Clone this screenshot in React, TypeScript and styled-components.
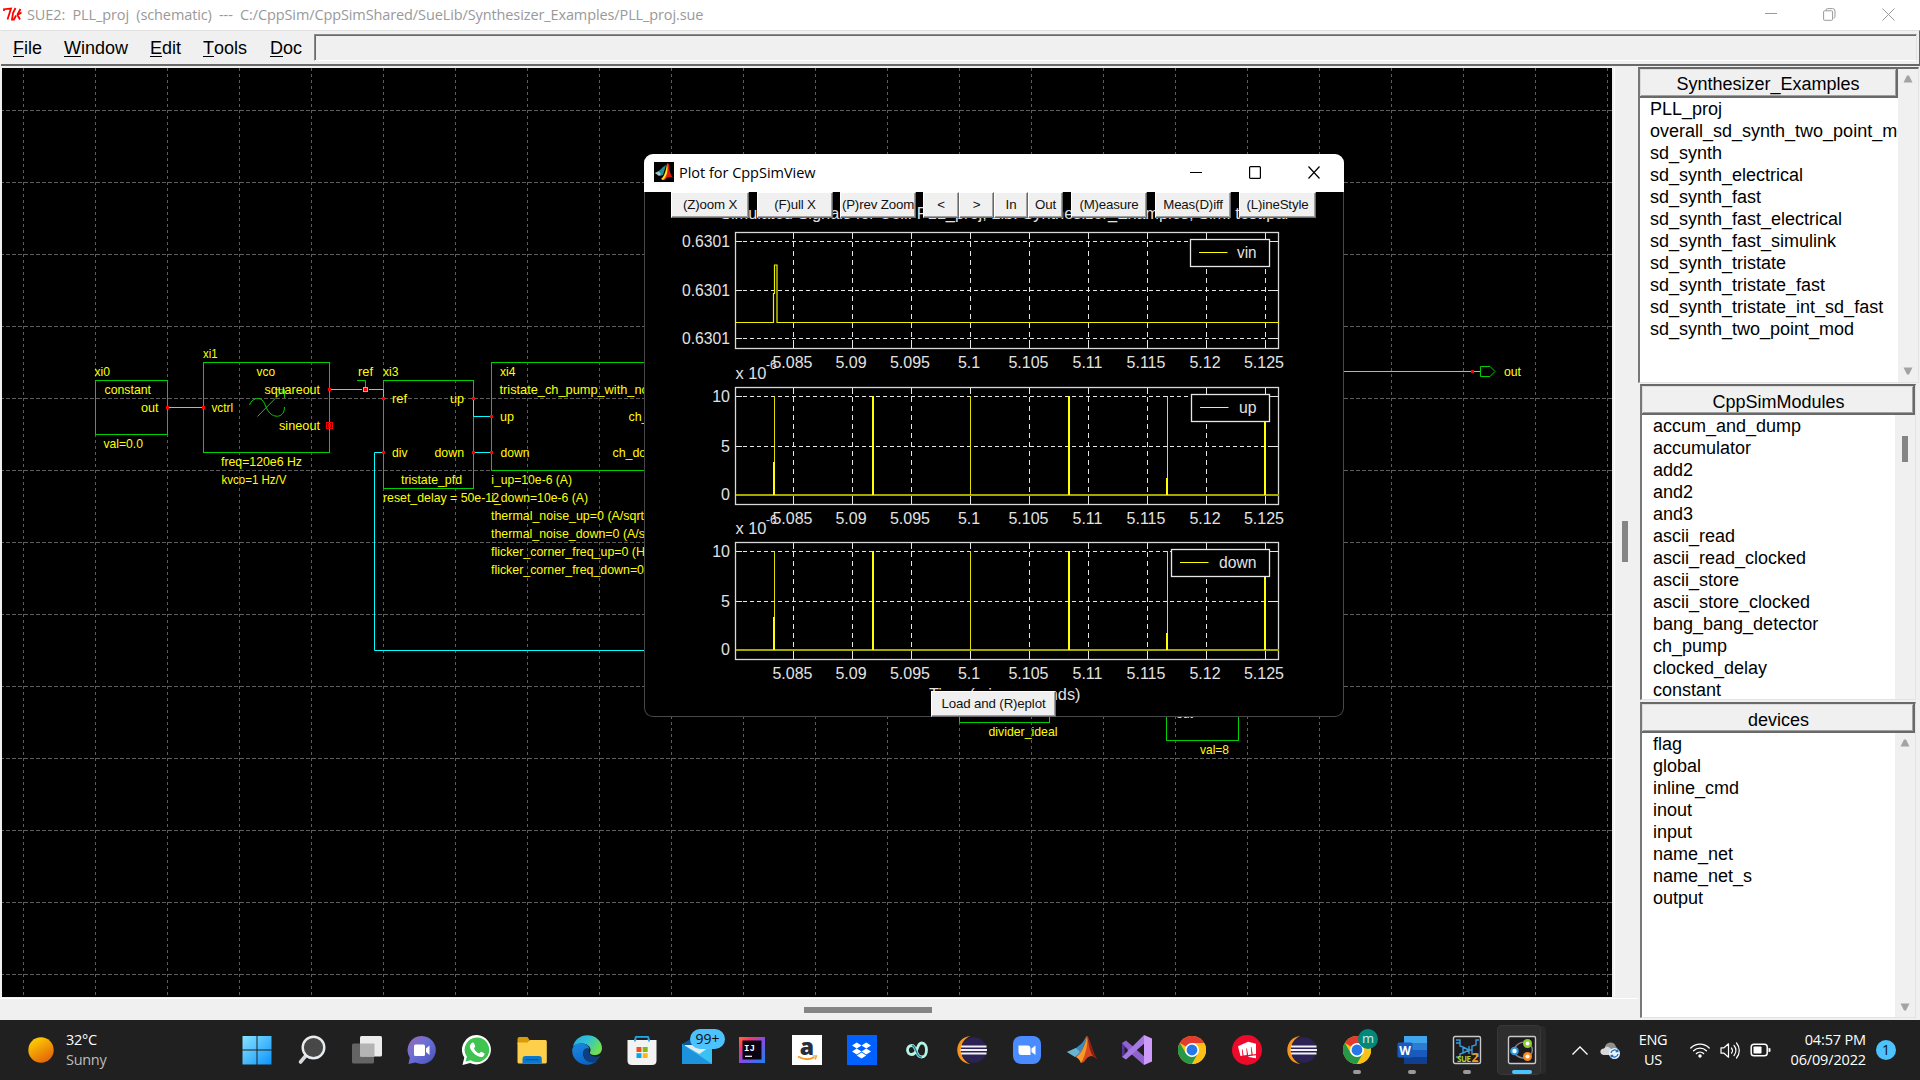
import React from "react";
import styled, { createGlobalStyle } from "styled-components";
import { SiRiotgames } from "react-icons/si";
import { FaDropbox } from "react-icons/fa";

const ARIAL = `"Liberation Sans", Arial, sans-serif`;
const SEGOE = `"Open Sans", "Noto Sans", sans-serif`;

const GlobalStyle = createGlobalStyle`
  * { box-sizing: border-box; }
  html, body { margin: 0; padding: 0; background: #f0f0f0; overflow: hidden; }
  svg { display: block; flex: none; }
`;

/* ---------- shell ---------- */

const Screen = styled.div`
  position: relative;
  width: 1920px;
  height: 1080px;
  display: flex;
  flex-direction: column;
  background: #f0f0f0;
  font-family: ${ARIAL};
  overflow: hidden;
`;

const TitleBar = styled.header`
  height: 30px;
  flex: none;
  display: flex;
  align-items: center;
  padding: 0 25px 2px 3px;
  background: #fff;
`;

const TitleText = styled.span`
  flex: 1;
  margin-left: 5px;
  font: 14.5px ${SEGOE};
  letter-spacing: -0.11px;
  color: #999;
  white-space: pre;
  font-variant-ligatures: none;
`;

const Captions = styled.div<{ $gap: number }>`
  display: flex;
  align-items: center;
  gap: ${(p) => p.$gap}px;
`;

const MenuBar = styled.nav`
  height: 36px;
  flex: none;
  display: flex;
  margin-left: 1px;
  padding: 3px 2px 4px 12px;
  border-top: 1px solid #e0e0e0;
  border-bottom: 2px solid #696969;
  border-right: 1px solid #696969;
`;

const MenuItem = styled.div<{ $width: number }>`
  width: ${(p) => p.$width}px;
  padding-top: 1px;
  font-size: 18px;
  line-height: 26px;
  color: #000;
`;

const Mnemonic = styled.span`
  display: inline-block;
  height: 22px;
  line-height: 26px;
  border-bottom: 1px solid #000;
`;

const Entry = styled.div`
  flex: 1;
  height: 27px;
  margin-left: 1px;
  border: 1px solid;
  border-color: #8a8a8a #e3e3e3 #fff #8a8a8a;
  box-shadow: inset 1px 1px 0 #696969;
`;

const Workspace = styled.main`
  flex: 1;
  min-height: 0;
  display: flex;
  padding-top: 1px;
`;

const CanvasColumn = styled.section`
  width: 1638px;
  flex: none;
  display: flex;
  flex-direction: column;
`;

const CanvasRow = styled.div`
  display: flex;
  height: 932px;
  padding: 1px 0 2px 2px;
  border-bottom: 1px solid #fff;
`;

const VScroll = styled.div`
  width: 24px;
  margin-left: 2px;
  border-left: 1px solid #fff;
  display: flex;
  justify-content: center;
  align-items: flex-start;
  padding: 453px 3px 0 0;
`;

const HScroll = styled.div`
  flex: 1;
  display: flex;
  align-items: center;
  padding: 1px 0 0 804px;
`;

const Thumb = styled.i<{ $w: number; $h: number }>`
  width: ${(p) => p.$w}px;
  height: ${(p) => p.$h}px;
  background: #858585;
`;

/* ---------- side bar ---------- */

const Sidebar = styled.aside`
  flex: 1;
  display: flex;
  flex-direction: column;
  min-width: 0;
`;

const Panel = styled.div<{ $height: number; $left: number; $right: number; $top?: number }>`
  height: ${(p) => p.$height}px;
  flex: none;
  margin: ${(p) => p.$top ?? 0}px ${(p) => p.$right}px 0 ${(p) => p.$left}px;
  display: grid;
  grid-template-columns: 1fr 20px;
  grid-template-rows: 29px 1fr;
  border: 2px solid;
  border-color: #696969 #e3e3e3 #e3e3e3 #777;
  border-right-width: 1px;
  border-bottom-width: 1px;
  background: #fff;
`;

const PanelHead = styled.div<{ $wide?: boolean }>`
  grid-column: ${(p) => (p.$wide ? "1 / 3" : "1 / 2")};
  display: flex;
  justify-content: center;
  align-items: center;
  padding: ${(p) => (p.$wide ? "4px 0 0 2px" : "2px 0 0 0")};
  font-size: 18px;
  line-height: 20px;
  background: #f0f0f0;
  border: solid #696969;
  border-width: 0 2px 2px 0;
  box-shadow: inset 1px 1px 0 #dcdcdc, inset -1px -1px 0 #a0a0a0;
`;

const List = styled.ul<{ $indent: number }>`
  margin: 0;
  padding: 0 0 0 ${(p) => p.$indent}px;
  list-style: none;
  overflow: hidden;
  grid-column: 1;
  grid-row: 2;
`;

const ListItem = styled.li`
  height: 22px;
  line-height: 22px;
  font-size: 18px;
  white-space: nowrap;
`;

const Track = styled.div<{ $full?: boolean; $pad: string }>`
  grid-column: 2;
  grid-row: ${(p) => (p.$full ? "1 / 3" : "2")};
  display: flex;
  flex-direction: column;
  align-items: center;
  justify-content: space-between;
  padding: ${(p) => p.$pad};
  background: #f0f0f0;
`;

const Arrow = ({ down }: { down?: boolean }) => (
  <svg width="10" height="8" viewBox="0 0 10 8">
    <path d={down ? "M0.5 0.5H9.5L6 7.5H4Z" : "M0.5 7.5H9.5L6 0.5H4Z"} fill="#a3a3a3" />
  </svg>
);

const EXAMPLES = ["PLL_proj", "overall_sd_synth_two_point_mod", "sd_synth", "sd_synth_electrical", "sd_synth_fast", "sd_synth_fast_electrical", "sd_synth_fast_simulink", "sd_synth_tristate", "sd_synth_tristate_fast", "sd_synth_tristate_int_sd_fast", "sd_synth_two_point_mod"];
const MODULES = ["accum_and_dump", "accumulator", "add2", "and2", "and3", "ascii_read", "ascii_read_clocked", "ascii_store", "ascii_store_clocked", "bang_bang_detector", "ch_pump", "clocked_delay", "constant"];
const DEVICES = ["flag", "global", "inline_cmd", "inout", "input", "name_net", "name_net_s", "output"];

const Items = ({ names, indent }: { names: string[]; indent: number }) => (
  <List $indent={indent}>
    {names.map((n) => (
      <ListItem key={n}>{n}</ListItem>
    ))}
  </List>
);

/* ---------- schematic ---------- */

const Schematic = styled.svg`
  background: #000;
  font-family: ${ARIAL};
  font-size: 12.4px;
`;

type Label = [string, number, number, number?];
const LABELS: Label[] = [
  ["xi0", 94.5, 376, 110], ["constant", 104.5, 394, 151], ["out", 141, 412, 158.5], ["val=0.0", 103.5, 448, 143],
  ["xi1", 203, 358, 217.5], ["vco", 256.5, 376, 275], ["squareout", 264.5, 394, 320], ["vctrl", 211.5, 412, 233],
  ["sineout", 279, 430, 320], ["freq=120e6 Hz", 221, 466, 302], ["kvco=1 Hz/V", 221.5, 484, 286.5],
  ["ref", 358, 376, 373], ["xi3", 383, 376, 398.5], ["ref", 392, 403, 407], ["up", 450, 403, 464],
  ["div", 392, 457, 407.5], ["down", 434.5, 457, 464], ["tristate_pfd", 401, 484, 462],
  ["reset_delay = 50e-12", 383, 502, 499], ["xi4", 500, 376, 515.5], ["tristate_ch_pump_with_noise", 499.5, 394, 665],
  ["up", 500, 421, 514], ["down", 500.5, 457, 529.5], ["ch_up", 628.5, 421], ["ch_down", 612.5, 457],
  ["i_up=10e-6 (A)", 491.3, 484, 572], ["i_down=10e-6 (A)", 491.3, 502, 588],
  ["thermal_noise_up=0 (A/sqrt", 491, 520, 644], ["thermal_noise_down=0 (A/sqrt", 491, 538],
  ["flicker_corner_freq_up=0 (Hz)", 491, 556], ["flicker_corner_freq_down=0", 491, 574, 644],
  ["out", 1504, 376, 1521], ["divider_ideal", 988.5, 736, 1057.5], ["out", 1176, 718, 1193], ["val=8", 1200, 754, 1229],
];

const BOXES = [
  [95, 380, 72, 54], [203, 362, 126, 90], [383, 380, 90, 108], [491, 362, 180, 108],
  [959, 650, 90, 72], [1166, 686, 72, 54],
];

const PINS = [
  [167, 407], [203, 407], [329, 389], [329, 425], [383, 398], [473, 398], [491, 416], [473, 452], [491, 452], [383, 452], [1472, 371],
];

const SchematicView = () => (
  <Schematic width="1610" height="929" viewBox="2 68 1610 929">
    <g stroke="#5c5c5c" shapeRendering="crispEdges">
      {Array.from({ length: 13 }, (_, i) => (
        <line key={i} x1="0" x2="1612" y1={110.5 + 72 * i} y2={110.5 + 72 * i} strokeDasharray="4 2" />
      ))}
      {Array.from({ length: 23 }, (_, i) => (
        <line key={i} y1="68" y2="997" x1={23.5 + 72 * i} x2={23.5 + 72 * i} strokeDasharray="3 3" />
      ))}
    </g>
    <g fill="none" stroke="#00d000">
      {BOXES.map(([x, y, w, h]) => (
        <rect key={`${x}-${y}`} x={x + 0.5} y={y + 0.5} width={w} height={h} />
      ))}
      <path d="M357 380.5H365.5V387" />
      <path d="M249.5 405Q252 398.5 258 398.5C265 398.5 265 408 269 412C274 418.500 284.500 418 284.5 407M257.5 416.5L284 389.500M275 389.5H284.5V398" />
      <path d="M1480.500 366.500H1490L1495 371.500L1490 376.500H1480.500Z" />
    </g>
    <g fill="none" stroke="#00ffff">
      <path d="M167 407.500H203M330 389.500H362M369 389.500H383.500V398M473.500 398V416.500H491M473 452.500H491M383 452.500H374.500V650.500H960M1300 371.500H1480" />
      <rect x="363.500" y="387.500" width="4" height="4" />
    </g>
    <g fill="#ff0000">
      {PINS.map(([x, y]) => (
        <rect key={`${x}-${y}`} x={x - 1} y={y - 1} width="3" height="3" />
      ))}
      <rect x="364" y="388" width="3" height="3" />
      <rect x="326.500" y="422.500" width="6" height="6" fill="none" stroke="#f00" />
    </g>
    <g fill="#ffff00">
      {LABELS.map(([t, x, y, end], i) => (
        <text key={i} x={x} y={y} textLength={end ? end - x : undefined} lengthAdjust="spacingAndGlyphs">{t}</text>
      ))}
    </g>
  </Schematic>
);

/* ---------- plot window ---------- */

const PlotWindow = styled.section`
  position: absolute;
  left: 644px;
  top: 154px;
  width: 700px;
  height: 563px;
  display: flex;
  flex-direction: column;
  justify-content: flex-start;
  border-radius: 9px;
  background: #000;
  box-shadow: inset 0 0 0 1px #484848;
  overflow: hidden;
`;

const PlotTitleBar = styled.header`
  height: 38px;
  flex: none;
  display: flex;
  align-items: center;
  padding: 0 24px 2px 10px;
  background: #fff;
  z-index: 1;
`;

const PlotTitle = styled.span`
  flex: 1;
  margin-left: 5px;
  font: 14.5px ${SEGOE};
  letter-spacing: -0.02px;
  color: #000;
`;

const Figure = styled.svg`
  position: absolute;
  left: 0;
  top: 38px;
  font-family: ${ARIAL};
  font-size: 16px;
`;

const ToolRow = styled.div`
  display: flex;
  padding-left: 27px;
  z-index: 1;
`;

const ToolButton = styled.button<{ $w: number; $ml?: number }>`
  width: ${(p) => p.$w}px;
  height: 26px;
  margin: 0 0 0 ${(p) => p.$ml ?? 0}px;
  padding: 0 0 2px;
  border: 1px solid;
  border-color: #fff #696969 #696969 #fff;
  box-shadow: inset -1px -1px 0 #a0a0a0;
  background: #f0f0f0;
  font: 13.3px ${ARIAL};
  letter-spacing: -0.15px;
  color: #111;
  white-space: nowrap;
  overflow: hidden;
`;

const LoadRow = styled.div`
  display: flex;
  margin-top: auto;
  padding-left: 287px;
  z-index: 1;
`;

const XT = [793.5, 852, 911, 970, 1029.5, 1088.5, 1147, 1206, 1265];
const XL = ["5.085", "5.09", "5.095", "5.1", "5.105", "5.11", "5.115", "5.12", "5.125"];

interface AxesProps {
  top: number;
  bottom: number;
  rows: [number, string][];
  exponent?: boolean;
  legend: { name: string; x: number; textX: number };
  children: React.ReactNode;
}

const Axes = ({ top, bottom, rows, exponent, legend, children }: AxesProps) => (
  <g>
    <g stroke="#e6e6e6" shapeRendering="crispEdges">
      {XT.map((x) => (
        <g key={x}>
          <line x1={x} x2={x} y1={top} y2={bottom} strokeDasharray="5 4" />
          <path d={`M${x} ${top}v6M${x} ${bottom}v-9`} />
        </g>
      ))}
      {rows.map(([y], i) => (
        <g key={i}>
          <line x1="736" x2="1279" y1={y} y2={y} strokeDasharray="4 3" />
          <path d={`M736 ${y}h6M1279 ${y}h-8`} />
        </g>
      ))}
    </g>
    <rect x="735.500" y={top} width="543" height={bottom - top} fill="none" stroke="#d8d8d8" strokeWidth="1.300" />
    {children}
    <rect x={legend.x} y={top + 7} width={1269.5 - legend.x} height="27" fill="#000" stroke="#e6e6e6" strokeWidth="1.300" />
    <path d={`M${legend.x + 8.5} ${top + 20}h28.500`} stroke="#ff0" />
    <g fill="#e2e2e2">
      <text x={legend.textX} y={top + 25.500} textLength={1256.5 - legend.textX} lengthAdjust="spacingAndGlyphs">{legend.name}</text>
      {rows.map(([y, t], i) => (
        <text key={i} x="730" y={y + 5} textAnchor="end" textLength={t.length > 2 ? 48 : undefined} lengthAdjust="spacingAndGlyphs">{t}</text>
      ))}
      {XL.map((t, i) => (
        <text key={t} x={XT[i] - 1} y={bottom + 19} textAnchor="middle">{t}</text>
      ))}
      {exponent && (
        <>
          <text x="735.500" y={top - 9} textLength="31" lengthAdjust="spacingAndGlyphs">x 10</text>
          <text x="766" y={top - 19} fontSize="12">-6</text>
        </>
      )}
    </g>
  </g>
);

const Spikes = ({ top, base }: { top: number; base: number }) => (
  <g shapeRendering="crispEdges">
    <rect x="736" y={base - 1} width="543" height="2" fill="#a6a600" />
    <g fill="#e0e000">
      <rect x="774" y={top} width="1" height={base - top} />
      <rect x="970" y={top} width="1" height={base - top} />
      <rect x="1167" y={top} width="1" height={base - top} />
    </g>
    <g fill="#ffff00">
      <rect x="773" y={base - 33} width="2" height="33" />
      <rect x="872" y={top} width="2" height={base - top} />
      <rect x="1068" y={top} width="2" height={base - top} />
      <rect x="1166" y={base - 17} width="2" height="17" />
      <rect x="1264" y={top} width="2" height={base - top} />
    </g>
  </g>
);

const MatlabMark = ({ size }: { size: number }) => (
  <svg width={size} height={size} viewBox="0 0 30 30">
    <path d="M0 17L9 13L14 9C17 7 18 2 20 1L16 17L9 22Z" fill="#3c88b8" />
    <path d="M0 17L9 13L13 17L8 22Z" fill="#6ab4cf" />
    <path d="M9 22C13 20 17 13 20 1C22 1 25 16 30 24C25 19 21 20 17 27L14 28C13 25 11 23 9 22Z" fill="#d9481c" />
    <path d="M20 1C21 5 20 18 14 28C13 25 11 23 9 22C14 19 18 12 20 1Z" fill="#f49a2a" />
    <path d="M20 1C22 3 25 16 30 24L26 21C22 15 22 8 20 1Z" fill="#8a1c10" />
  </svg>
);

/* low-colour variant of the mark, as drawn in the figure's caption */
const MatlabSmall = () => (
  <svg width="20" height="20" viewBox="0 0 20 20">
    <rect width="20" height="20" fill="#000" />
    <path d="M1 11L6 8L9 5L12 3L9 13L6 14Z" fill="#2b8f96" />
    <path d="M1 11L5 9.500L7 12L5 14Z" fill="#a8c4c8" />
    <path d="M8 18C11 15 13 10 13 1L15 2C15 8 16 12 19 16C16 14 13 15 11 18Z" fill="#e01b0c" />
    <path d="M7 17C10 15 12 9 13 1.500C14.500 7 13 15 9 18Z" fill="#ffe11a" />
  </svg>
);

const PlotView = () => (
  <PlotWindow>
    <PlotTitleBar>
      <MatlabSmall />
      <PlotTitle>Plot for CppSimView</PlotTitle>
      <Captions $gap={47}>
        <svg width="12" height="12"><path d="M0 6.500H12" stroke="#000" /></svg>
        <svg width="12" height="14"><rect x="0.600" y="1.600" width="10.800" height="11.800" rx="1" fill="none" stroke="#000" strokeWidth="1.200" /></svg>
        <svg width="12" height="14"><path d="M0.500 1.500L11.500 13.500M11.500 1.500L0.500 13.500" stroke="#000" strokeWidth="1.200" /></svg>
      </Captions>
    </PlotTitleBar>
    <Figure width="700" height="525" viewBox="644 192 700 525">
      <g fill="#e2e2e2">
        <text x="720" y="219" textLength="570" lengthAdjust="spacingAndGlyphs">Simulated Signals for Cell: PLL_proj, Lib: Synthesizer_Examples, Sim: test.par</text>
        <text x="929" y="700" textLength="151.500" lengthAdjust="spacingAndGlyphs">Time (microseconds)</text>
      </g>
      <Axes top={232.5} bottom={348.5} rows={[[241.5, "0.6301"], [290.5, "0.6301"], [338.5, "0.6301"]]} legend={{ name: "vin", x: 1190.5, textX: 1237 }}>
        <path d="M736 322.500H773.500V293.500H774.500V265H777V322.500H1279" fill="none" stroke="#f0f000" strokeWidth="1.200" />
      </Axes>
      <Axes exponent top={387.5} bottom={504.5} rows={[[396.5, "10"], [446.5, "5"], [495, "0"]]} legend={{ name: "up", x: 1191.5, textX: 1239 }}>
        <Spikes top={396} base={495} />
      </Axes>
      <Axes exponent top={542.5} bottom={659.5} rows={[[551.5, "10"], [601.5, "5"], [650, "0"]]} legend={{ name: "down", x: 1171.5, textX: 1219 }}>
        <Spikes top={551} base={650} />
      </Axes>
    </Figure>
    <ToolRow>
      <ToolButton $w={78}>(Z)oom X</ToolButton>
      <ToolButton $w={76} $ml={8}>(F)ull X</ToolButton>
      <ToolButton $w={76} $ml={7}>(P)rev Zoom</ToolButton>
      <ToolButton $w={36} $ml={7}>&lt;</ToolButton>
      <ToolButton $w={35}>&gt;</ToolButton>
      <ToolButton $w={34}>In</ToolButton>
      <ToolButton $w={35}>Out</ToolButton>
      <ToolButton $w={76} $ml={8}>(M)easure</ToolButton>
      <ToolButton $w={76} $ml={8}>Meas(D)iff</ToolButton>
      <ToolButton $w={77} $ml={8}>(L)ineStyle</ToolButton>
    </ToolRow>
    <LoadRow>
      <ToolButton $w={125}>Load and (R)eplot</ToolButton>
    </LoadRow>
  </PlotWindow>
);

/* ---------- task bar ---------- */

const Taskbar = styled.footer`
  height: 60px;
  flex: none;
  display: flex;
  align-items: center;
  background: #202020;
  color: #fff;
  font-family: ${SEGOE};
`;

const Weather = styled.div`
  width: 229px;
  display: flex;
  align-items: center;
  gap: 12px;
  padding-left: 28px;
`;

const Lines = styled.div<{ $align: string; $w?: number; $ml?: number; $spacing?: number }>`
  width: ${(p) => (p.$w ? `${p.$w}px` : "auto")};
  margin-left: ${(p) => p.$ml ?? 0}px;
  text-align: ${(p) => p.$align};
  font-size: 14.5px;
  line-height: 20px;
  letter-spacing: ${(p) => p.$spacing ?? -0.3}px;
  white-space: nowrap;
`;

const Muted = styled.div`
  color: #bcbcbc;
`;

const Apps = styled.div`
  display: flex;
  width: 1320px;
`;

const AppCell = styled.div<{ $active?: boolean }>`
  position: relative;
  width: ${(p) => (p.$active ? 44 : 55)}px;
  height: 50px;
  margin-left: ${(p) => (p.$active ? 3 : 0)}px;
  padding-left: ${(p) => (p.$active ? 5 : 0)}px;
  display: flex;
  align-items: center;
  justify-content: center;
  border-radius: 5px;
  background: ${(p) => (p.$active ? "#2e2e2e" : "transparent")};
  box-shadow: ${(p) => (p.$active ? "inset 0 0 0 1px #383838, 6px 0 0 -1px #292929" : "none")};
`;

const RunDot = styled.i<{ $active?: boolean }>`
  position: absolute;
  bottom: 1px;
  width: ${(p) => (p.$active ? 20 : 8)}px;
  height: 4px;
  border-radius: 2px;
  background: ${(p) => (p.$active ? "#4cc2ff" : "#9a9a9a")};
`;

const MailBadge = styled.span`
  position: absolute;
  left: 21px;
  top: 4px;
  width: 35px;
  height: 20px;
  border-radius: 10px;
  background: #4cc2ff;
  color: #101010;
  font-size: 14px;
  line-height: 19px;
  text-align: center;
`;

const ProfileBadge = styled.span`
  position: absolute;
  left: 29px;
  top: 4px;
  width: 20px;
  height: 20px;
  border-radius: 50%;
  background: #00897b;
  color: #d4ece9;
  font-size: 13px;
  line-height: 18px;
  text-align: center;
`;

const LogoTile = styled.span<{ $bg: string; $round?: boolean }>`
  width: 30px;
  height: 30px;
  display: flex;
  align-items: center;
  justify-content: center;
  border-radius: ${(p) => (p.$round ? "50%" : "0")};
  background: ${(p) => p.$bg};
  color: #fff;
`;

const Tray = styled.div`
  display: flex;
  align-items: center;
  margin-left: 23px;
`;

const TraySlot = styled.span<{ $ml: number }>`
  margin-left: ${(p) => p.$ml}px;
`;

const Notice = styled.span`
  width: 20px;
  height: 20px;
  margin-left: 10px;
  border-radius: 50%;
  background: #4cc2ff;
  color: #111;
  font-size: 14px;
  line-height: 20px;
  text-align: center;
`;

const Icon = ({ children, s = 30 }: { children: React.ReactNode; s?: number }) => (
  <svg width={s} height={s} viewBox="0 0 30 30">{children}</svg>
);

const StartIcon = () => (
  <Icon>
    <defs>
      <linearGradient id="win" x1="0" y1="0" x2="30" y2="30" gradientUnits="userSpaceOnUse"><stop stopColor="#8ce4ff" /><stop offset="1" stopColor="#0a93fb" /></linearGradient>
    </defs>
    <path d="M0.500 1H14.500V14.500H0.500ZM15.500 1H29.500V14.500H15.500ZM0.500 15.500H14.500V29.500H0.500ZM15.500 15.500H29.500V29.500H15.500Z" fill="url(#win)" />
  </Icon>
);

const SearchIcon = () => (
  <Icon>
    <path d="M9 20.500L3.500 27" stroke="#d5dade" strokeWidth="3.600" strokeLinecap="round" />
    <circle cx="16.500" cy="12.500" r="10.800" fill="#484848" stroke="#e9ecee" strokeWidth="2.400" />
  </Icon>
);

const TaskViewIcon = () => (
  <Icon>
    <rect x="0" y="8.500" width="22" height="20" rx="1.500" fill="#646464" />
    <rect x="8" y="1" width="22" height="20.500" rx="1.500" fill="#ececec" />
    <rect x="8" y="8.500" width="14.500" height="13" fill="#b4b4b4" />
  </Icon>
);

const MeetIcon = () => (
  <Icon>
    <defs>
      <linearGradient id="meet" x1="0" y1="0" x2="1" y2="1"><stop stopColor="#9b6ab0" /><stop offset="0.450" stopColor="#6b6fd8" /><stop offset="1" stopColor="#4b50b8" /></linearGradient>
    </defs>
    <path d="M15 1A14 14 0 1 1 8.500 27.500L1.500 29L2.800 22.500A14 14 0 0 1 15 1Z" fill="url(#meet)" />
    <rect x="7" y="9.500" width="11" height="11.500" rx="1.500" fill="#fff" />
    <path d="M19 13.500L22.500 10.500V20L19 17Z" fill="#fff" />
  </Icon>
);

const WhatsAppIcon = () => (
  <Icon>
    <path d="M15 0A14.700 14.700 0 1 1 8 28L0.500 30L2.300 22.500A14.700 14.700 0 0 1 15 0Z" fill="#fff" />
    <path d="M15 2.500A12.300 12.300 0 1 1 8.500 25.300L3.600 26.500L4.900 21.800A12.300 12.300 0 0 1 15 2.500Z" fill="#3fc351" />
    <path d="M9.500 8.200C10.500 7.300 11.700 7.400 12 8.300L13.200 11C13.400 11.800 12 13 12 13.400C12.800 15.500 15 17.600 17.200 18.300C17.700 18.400 18.600 16.700 19.300 16.800L22.300 18.300C23 19.200 22 21.500 20.200 22C16 23 8 16 7.800 11.700C7.800 10.200 8.700 8.900 9.500 8.200Z" fill="#fff" />
  </Icon>
);

const FolderIcon = () => (
  <Icon>
    <path d="M0.500 4Q0.500 2 2.500 2H10.500L12.500 5V9H0.500Z" fill="#d99b06" />
    <path d="M0.500 7.500H10.500L13 5H28.500Q29.800 5 29.800 6.500V27Q29.800 28.500 28 28.500H2Q0.500 28.500 0.500 27Z" fill="#fdcf4b" />
    <path d="M5.500 28.500V24Q5.500 21 8.500 21H22Q24.800 21 24.800 24V28.500Z" fill="#0b78cf" />
    <path d="M8.500 24.700H21.500" stroke="#0a4d8e" />
  </Icon>
);

const EdgeIcon = () => (
  <Icon>
    <defs>
      <linearGradient id="e1" x1="0" y1="0" x2="1" y2="0.500"><stop stopColor="#2aa5dd" /><stop offset="0.500" stopColor="#2fc3d6" /><stop offset="1" stopColor="#6fe04f" /></linearGradient>
      <linearGradient id="e2" x1="0" y1="0" x2="0.500" y2="1"><stop stopColor="#1c8be0" /><stop offset="1" stopColor="#0b63c5" /></linearGradient>
    </defs>
    <path d="M1 12C2 5 8 0.200 15.200 0.200C24 0.200 30 6.500 30 13C30 17.500 27 20 23 20C19 20 17.500 18.500 18 17.300C20 14 17 9 11 8.500C6 8.200 2 10 1 12Z" fill="url(#e1)" />
    <path d="M0.200 16C0.300 11 4 8 9.500 8.200C14.500 8.500 17.500 11.500 17 14C13 12 9.500 17.500 12 22.500C14 27 20 28.500 25.500 25.500C21 30.500 11 31.500 5 26C2 23.500 0.200 20 0.200 16Z" fill="url(#e2)" />
    <path d="M11.200 18C11 14.500 13.500 12.500 17 14C15.500 18 19 22 24.500 21.700L28 21C27 23.500 25 26.500 21.500 27.500C15 28 11.500 23 11.200 18Z" fill="#0c3f83" />
  </Icon>
);

const StoreIcon = () => (
  <Icon>
    <path d="M8.500 7V2.500Q8.500 1.800 9.200 1.800H20.800Q21.500 1.800 21.500 2.500V7" fill="none" stroke="#23a9e6" strokeWidth="1.800" />
    <path d="M0.500 5H29.500V25.500Q29.500 30 25 30H5Q0.500 30 0.500 25.500Z" fill="#f3f3f3" />
    <path d="M8 4V6.500M22 4V6.500" stroke="#23a9e6" strokeWidth="1.800" />
    <path d="M9.500 12H14.500V17H9.500Z" fill="#f1511b" /><path d="M15.700 12H20.700V17H15.700Z" fill="#80bb0a" />
    <path d="M9.500 18.200H14.500V23H9.500Z" fill="#06a6ef" /><path d="M15.700 18.200H20.700V23H15.700Z" fill="#fcb80d" />
  </Icon>
);

const MailIcon = () => (
  <Icon>
    <path d="M0 9L14 1L30 9V15H0Z" fill="#0f5796" />
    <path d="M3 10H27V16L15 21L3 15Z" fill="#e6eaee" />
    <path d="M0 9L17.500 19L30 10V29H0Z" fill="#37c2f2" />
    <path d="M0 9L30 29H0Z" fill="#1c93dc" />
  </Icon>
);

const IntelliJIcon = () => (
  <svg width="26" height="26" viewBox="0 0 26 26">
    <defs>
      <linearGradient id="ij" x1="0" y1="0" x2="1" y2="1"><stop stopColor="#fc6f2c" /><stop offset="0.250" stopColor="#f8356c" /><stop offset="0.500" stopColor="#8b4ae0" /><stop offset="1" stopColor="#1783f0" /></linearGradient>
    </defs>
    <rect width="26" height="26" fill="url(#ij)" />
    <rect x="3.500" y="3.500" width="19" height="19" fill="#090212" />
    <text x="5" y="13.500" fill="#fff" fontFamily="Liberation Mono, monospace" fontWeight="700" fontSize="9">IJ</text>
    <path d="M6 19.300H13" stroke="#fff" strokeWidth="1.200" />
  </svg>
);

const AmazonIcon = () => (
  <Icon>
    <rect width="30" height="30" fill="#fff" />
    <text x="15" y="20" fontFamily="Open Sans, sans-serif" fontWeight="800" fontSize="23" textAnchor="middle" fill="#26303d">a</text>
    <path d="M6 21.500Q14.500 26.500 22.500 22.300" fill="none" stroke="#f79a1c" strokeWidth="1.800" />
    <path d="M20.500 21L24.500 20.800L23.200 24.500" fill="none" stroke="#f79a1c" strokeWidth="1.200" />
  </Icon>
);

const InfinityIcon = () => (
  <svg width="22" height="18" viewBox="0 0 22 18">
    <path d="M10.500 9.500C9 12.500 7.800 13.500 5.800 13.500C3.300 13.500 1.500 11.500 1.500 9S3.300 4.500 5.800 4.500C9 4.500 9.500 9 11 12C12 14.500 13.500 16 15.700 16C18.700 16 20.500 13 20.500 9C20.500 5 18.700 2 15.700 2C12.500 2 11.700 6 10.500 9.500Z" fill="none" stroke="#b4f5e6" strokeWidth="2.800" />
    <path d="M5.800 4.500C9 4.500 9.500 9 11 12C12 14.500 13.500 16 15.700 16" fill="none" stroke="#1f7f9e" strokeWidth="1.300" />
  </svg>
);

const EclipseIcon = () => (
  <Icon>
    <path d="M13.500 1C5 1.500 0.300 8 0.300 15S5 28.500 13.500 29C7 26.500 4 21 4 15S7 3.500 13.500 1Z" fill="#f7941e" />
    <circle cx="16.800" cy="15" r="12.800" fill="#2c2255" />
    <path d="M4 11.500H29.500M3.500 15H30M4 18.500H29.500" stroke="#f2f0f6" strokeWidth="2" />
  </Icon>
);

const ZoomIcon = () => (
  <Icon>
    <rect x="1" y="1" width="28" height="28" rx="8" fill="#4a8cff" />
    <path d="M6.500 10.500H15.500Q18.500 10.500 18.500 13.500V20H9.500Q6.500 20 6.500 17Z" fill="#fff" />
    <path d="M19.500 13.500L23.500 10.500V20L19.500 17Z" fill="#fff" />
  </Icon>
);

const VisualStudioIcon = () => (
  <Icon>
    <path d="M0 8L4 5.500L22 21L22 30L0 11Z" fill="#8e62cf" />
    <path d="M0 8L6 14.500L0 22Z" fill="#56349a" />
    <path d="M0 22L22 0V9L4 24.500Z" fill="#a47ae2" />
    <path d="M22 0L30 3.500V26.500L22 30Z" fill="#cf9bfb" />
    <path d="M22 9V21L15 15Z" fill="#202020" /><path d="M2.500 12L6 15L2.500 18Z" fill="#202020" />
  </Icon>
);

const ChromeIcon = () => (
  <Icon s={28}>
    <circle cx="15" cy="15" r="15" fill="#fbc116" />
    <path d="M15 15L2 7.500A15 15 0 0 1 28 7.500H15Z" fill="#e33b2e" />
    <path d="M2 7.500A15 15 0 0 0 15 30L21.500 18.800L8.500 18.700Z" fill="#279847" />
    <path d="M15 15L21.500 18.800L15 30A15 15 0 0 0 28 7.500H15Z" fill="#fbc116" />
    <circle cx="15" cy="15" r="7.500" fill="#fff" />
    <circle cx="15" cy="15" r="5.800" fill="#2678ea" />
  </Icon>
);

const WordIcon = () => (
  <Icon>
    <path d="M7 1H30V8H7Z" fill="#41a5ee" /><path d="M7 8H30V15H7Z" fill="#2b7cd3" />
    <path d="M7 15H30V22H7Z" fill="#185abd" /><path d="M7 22H30V29H7Z" fill="#103f91" />
    <rect x="0.500" y="7.500" width="15" height="15" rx="1.500" fill="#185abd" />
    <text x="8" y="19.500" textAnchor="middle" fontFamily="Open Sans, sans-serif" fontWeight="700" fontSize="12" fill="#fff">W</text>
  </Icon>
);

const SueIcon = () => (
  <Icon>
    <rect x="1.500" y="1.500" width="27" height="27" rx="1.500" fill="#1d1a20" stroke="#c9c9c9" strokeWidth="1.400" />
    <path d="M4 5H8V11L11 12V18L8 19V22H4M11 12L17 15L11 18M17 11V19M17 15H20V11L24 10V5H27M20 15V19H26V22M8 8H4" fill="none" stroke="#3a9bd8" strokeWidth="1.400" />
    <text x="5" y="27" fontFamily="Open Sans, sans-serif" fontWeight="700" fontSize="8" textLength="14" fill="#a8d430">SUE</text>
    <text x="19.500" y="27" fontFamily="Open Sans, sans-serif" fontWeight="700" fontSize="12" fill="#f39a22">2</text>
  </Icon>
);

const CppSimIcon = () => (
  <Icon>
    <rect x="1.500" y="1.500" width="27" height="27" rx="1.500" fill="#1d1a20" stroke="#c9c9c9" strokeWidth="1.400" />
    <path d="M7 16C7 11 14 5 20 8C27 11 27 18 21 22C15 25 8 21 7 16" fill="none" stroke="#858585" strokeWidth="1.400" />
    <circle cx="20.500" cy="8.500" r="4.500" fill="#8bd02e" /><circle cx="20.500" cy="8.500" r="1.900" fill="#fff" />
    <circle cx="7.500" cy="16" r="4.300" fill="#2e9be0" /><circle cx="7.500" cy="16" r="2.200" fill="#fff" />
    <circle cx="20.500" cy="21.500" r="4.500" fill="#f68a1e" /><circle cx="20.500" cy="21.500" r="2.100" fill="#fff" />
  </Icon>
);

const TrayIcons = () => (
  <Tray>
    <svg width="16" height="9" viewBox="0 0 16 9"><path d="M0.500 8.500L8 1L15.500 8.500" fill="none" stroke="#fff" strokeWidth="1.300" /></svg>
    <TraySlot $ml={12}>
      <svg width="21" height="17" viewBox="0 0 21 17">
        <path d="M5 4.500C7 -1 15 -0.500 16 5C18.500 6 18 10 16 10H6Z" fill="#8f8f8f" />
        <path d="M3.500 13C-1 12.500 -0.500 6.500 4 6.500C5.500 3.500 10 4.500 11 7L15 9V13Z" fill="#d8d8d8" />
        <circle cx="14.500" cy="11.500" r="5.500" fill="#e8f3fc" />
        <path d="M11 11A3.700 3.700 0 0 1 17.500 9.300M18 12A3.700 3.700 0 0 1 11.500 13.700M17.800 7.500V9.600H15.700M11.200 15.500V13.400H13.300" fill="none" stroke="#1b6fc0" strokeWidth="1.300" />
      </svg>
    </TraySlot>
    <Lines $align="center" $w={30} $ml={17}>ENG<br />US</Lines>
    <TraySlot $ml={22}>
      <svg width="20" height="16" viewBox="0 0 20 16">
        <path d="M0.800 6A13 13 0 0 1 19.200 6M3.600 8.800A9 9 0 0 1 16.400 8.800M6.400 11.500A5.200 5.200 0 0 1 13.600 11.500" fill="none" stroke="#fff" strokeWidth="1.300" strokeLinecap="round" />
        <circle cx="10" cy="14" r="1.700" fill="#fff" />
      </svg>
    </TraySlot>
    <TraySlot $ml={10}>
      <svg width="20" height="17" viewBox="0 0 20 17">
        <path d="M1 5.800H4L8.500 1.800V15.200L4 11.200H1Z" fill="none" stroke="#fff" strokeWidth="1.200" strokeLinejoin="round" />
        <path d="M11.500 6A4 4 0 0 1 11.500 11M14 3.500A7.500 7.500 0 0 1 14 13.500M16.500 1A11.500 11.500 0 0 1 16.500 16" fill="none" stroke="#fff" strokeWidth="1.200" strokeLinecap="round" />
      </svg>
    </TraySlot>
    <TraySlot $ml={10}>
      <svg width="21" height="14" viewBox="0 0 21 14">
        <rect x="1.200" y="1.200" width="16" height="11.600" rx="2.800" fill="none" stroke="#fff" strokeWidth="1.500" />
        <rect x="3.500" y="3.500" width="8" height="7" rx="0.800" fill="#fff" />
        <path d="M18.500 4.800V9.200L20.500 8.500V5.500Z" fill="#fff" />
      </svg>
    </TraySlot>
    <Lines $align="right" $w={80} $ml={15} $spacing={-0.15}>04:57 PM<br />06/09/2022</Lines>
    <Notice>1</Notice>
  </Tray>
);

const TaskbarView = () => (
  <Taskbar>
    <Weather>
      <svg width="26" height="26" viewBox="0 0 26 26">
        <defs><linearGradient id="sun" x1="0.200" y1="0" x2="0.800" y2="1"><stop stopColor="#ffd400" /><stop offset="1" stopColor="#e25c0a" /></linearGradient></defs>
        <circle cx="13" cy="13" r="12.700" fill="url(#sun)" />
      </svg>
      <Lines $align="left" $spacing={-0.3}>32°C<Muted>Sunny</Muted></Lines>
    </Weather>
    <Apps>
      <AppCell><StartIcon /></AppCell>
      <AppCell><SearchIcon /></AppCell>
      <AppCell><TaskViewIcon /></AppCell>
      <AppCell><MeetIcon /></AppCell>
      <AppCell><WhatsAppIcon /></AppCell>
      <AppCell><FolderIcon /></AppCell>
      <AppCell><EdgeIcon /></AppCell>
      <AppCell><StoreIcon /></AppCell>
      <AppCell><MailIcon /><MailBadge>99+</MailBadge></AppCell>
      <AppCell><IntelliJIcon /></AppCell>
      <AppCell><AmazonIcon /></AppCell>
      <AppCell><LogoTile $bg="#0061fe"><FaDropbox size={19} /></LogoTile></AppCell>
      <AppCell><InfinityIcon /></AppCell>
      <AppCell><EclipseIcon /></AppCell>
      <AppCell><ZoomIcon /></AppCell>
      <AppCell><MatlabMark size={30} /></AppCell>
      <AppCell><VisualStudioIcon /></AppCell>
      <AppCell><ChromeIcon /></AppCell>
      <AppCell><LogoTile $bg="#ee0a2b" $round><SiRiotgames size={18} /></LogoTile></AppCell>
      <AppCell><EclipseIcon /></AppCell>
      <AppCell><ChromeIcon /><ProfileBadge>m</ProfileBadge><RunDot /></AppCell>
      <AppCell><WordIcon /><RunDot /></AppCell>
      <AppCell><SueIcon /><RunDot /></AppCell>
      <AppCell $active><CppSimIcon /><RunDot $active /></AppCell>
    </Apps>
    <TrayIcons />
  </Taskbar>
);

/* ---------- application ---------- */

const MENUS: [string, number][] = [["File", 51], ["Window", 86], ["Edit", 53], ["Tools", 67], ["Doc", 43]];

export default function App() {
  return (
    <Screen>
      <GlobalStyle />
      <TitleBar>
        <svg width="19" height="14" viewBox="0 0 19 14">
          <path d="M1 4V2.200L8 1.500L4.500 12.500M12.500 1L10 6L9 12.500H11L13 8.500M17.500 2L14.500 7.500M18.500 5.500L14.500 8L17 12.500" fill="none" stroke="#f00" strokeWidth="1.800" />
        </svg>
        <TitleText>{"SUE2:  PLL_proj  (schematic)  ---  C:/CppSim/CppSimShared/SueLib/Synthesizer_Examples/PLL_proj.sue"}</TitleText>
        <Captions $gap={46}>
          <svg width="12" height="12"><path d="M0 5.500H12" stroke="#999" /></svg>
          <svg width="13" height="13"><path d="M3 2.500V2Q3 0.600 4.500 0.600H9.500Q12 0.600 12 3V8.500Q12 10 10.500 10" fill="none" stroke="#999" /><rect x="0.600" y="2.800" width="9" height="9.500" rx="1" fill="none" stroke="#999" /></svg>
          <svg width="13" height="13"><path d="M0.500 0.500L12.500 12.500M12.500 0.500L0.500 12.500" stroke="#999" /></svg>
        </Captions>
      </TitleBar>
      <MenuBar>
        {MENUS.map(([m, w]) => (
          <MenuItem key={m} $width={w}><Mnemonic>{m[0]}</Mnemonic>{m.slice(1)}</MenuItem>
        ))}
        <Entry />
      </MenuBar>
      <Workspace>
        <CanvasColumn>
          <CanvasRow>
            <SchematicView />
            <VScroll><Thumb $w={6} $h={41} /></VScroll>
          </CanvasRow>
          <HScroll><Thumb $w={128} $h={6} /></HScroll>
        </CanvasColumn>
        <Sidebar>
          <Panel $height={316} $left={0} $right={1}>
            <PanelHead>Synthesizer_Examples</PanelHead>
            <Items names={EXAMPLES} indent={10} />
            <Track $full $pad="6px 0 7px"><Arrow /><Arrow down /></Track>
          </Panel>
          <Panel $height={316} $left={2} $right={4} $top={1}>
            <PanelHead $wide>CppSimModules</PanelHead>
            <Items names={MODULES} indent={11} />
            <Track $pad="21px 0 0"><Thumb $w={6} $h={26} /></Track>
          </Panel>
          <Panel $height={316} $left={2} $right={4} $top={2}>
            <PanelHead $wide>devices</PanelHead>
            <Items names={DEVICES} indent={11} />
            <Track $pad="6px 0 6px"><Arrow /><Arrow down /></Track>
          </Panel>
        </Sidebar>
      </Workspace>
      <TaskbarView />
      <PlotView />
    </Screen>
  );
}
